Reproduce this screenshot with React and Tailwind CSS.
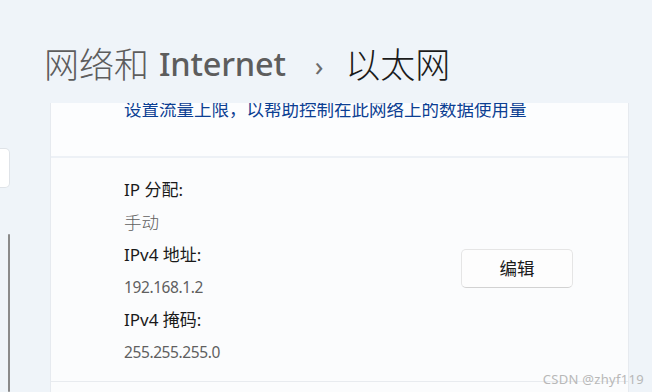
const FONT = { fontFamily: '"Noto Sans", "Noto Sans CJK SC", sans-serif' };

const ROWS = [
  { label: 'IP 分配:', value: '手动', cjk: true },
  { label: 'IPv4 地址:', value: '192.168.1.2' },
  { label: 'IPv4 掩码:', value: '255.255.255.0' },
];

export default function App() {
  return (
    <div
      className="relative flex w-[652px] h-[392px] overflow-hidden bg-[#eff4f9]"
      style={FONT}
    >
      {/* left nav pane edge */}
      <div className="flex w-[50px] flex-col">
        <div className="mt-[148px] h-[40px] w-[10px] rounded-r-[5px] border border-l-0 border-[#dfe3e8] bg-white" />
        <div className="ml-[8px] mt-[46px] w-[2px] flex-1 rounded-full bg-[#8a8a8a]" />
      </div>

      {/* main */}
      <div className="flex flex-1 flex-col pr-[23px]">
        <div className="flex h-[103px] items-center pt-[26px] text-[35px] leading-none">
          <span className="-ml-[6px] font-light text-[#5d5d5d]">网络和</span>
          <span className="ml-[10px] text-[32.5px] font-medium tracking-[-0.2px] text-[#5d5d5d]">Internet</span>
          <span className="ml-[29px] text-[28px] text-[#6b6b6b]">›</span>
          <span className="ml-[22px] font-light text-[#1b1b1b]">以太网</span>
        </div>

        <div className="flex flex-1 flex-col overflow-hidden border-x border-[#e6eaef] bg-[#fcfdfe]">
          <div className="h-[53px] pl-[73px]">
            <p className="-mt-[6px] text-[17.5px] leading-[24px] text-[#0c3f93]">
              设置流量上限，以帮助控制在此网络上的数据使用量
            </p>
          </div>
          <div className="h-[2px] bg-[#edf1f6]" />
          <div className="flex h-[223px] justify-between bg-[#fbfcfd] pl-[73px] pr-[55px] pt-[16px]">
            <div className="flex flex-col">
              {ROWS.map((r) => (
                <div key={r.label} className="flex flex-col leading-[32.4px]">
                  <span className="text-[17px] text-[#1a1a1a]">{r.label}</span>
                  <span
                    className={
                      r.cjk
                        ? 'text-[17.5px] font-light text-[#5f5f5f]'
                        : 'text-[15.5px] tracking-[-0.4px] text-[#5f5f5f]'
                    }
                  >
                    {r.value}
                  </span>
                </div>
              ))}
            </div>
            <button className="mt-[75px] flex h-[39px] w-[112px] items-center justify-center rounded-[5px] border border-[#e5e5e5] border-b-[#d2d2d2] bg-[#fdfdfd] text-[17.5px] text-[#1b1b1b]">
              编辑
            </button>
          </div>
          <div className="h-px bg-[#e8ebef]" />
          <div className="flex-1 bg-[#fbfcfd]" />
        </div>
      </div>

      <span className="absolute bottom-[3px] right-[8px] text-[13px] tracking-[0.3px] text-[#b8b8b8]">
        CSDN @zhyf119
      </span>
    </div>
  );
}
